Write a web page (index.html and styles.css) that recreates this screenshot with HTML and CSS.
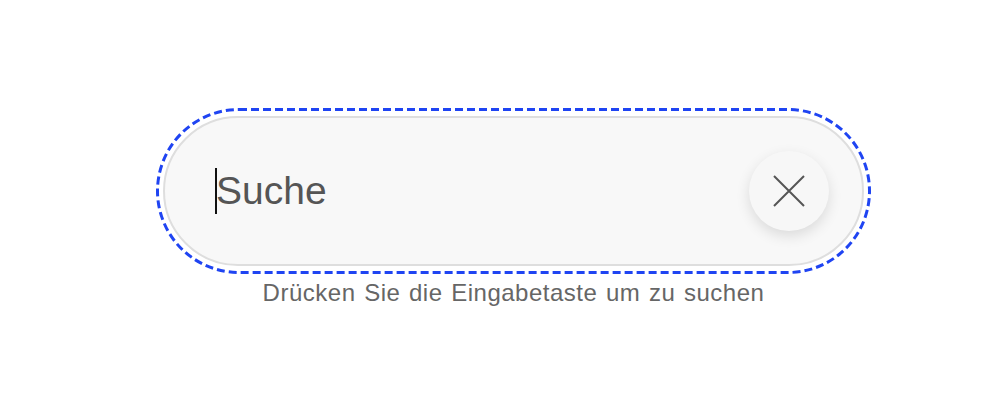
FILE: index.html
```html
<!DOCTYPE html>
<html lang="de">
<head>
    <meta charset="UTF-8">
    <meta name="viewport" content="width=device-width, initial-scale=1.0">
    <title>Suche</title>
    <link rel="stylesheet" href="styles.css">
</head>
<body>
    <div class="search">
        <div class="search-field">
            <!-- focus ring -->
            <svg class="focus-ring" width="717" height="167" viewBox="0 0 717 167">
                <rect x="1.5" y="1.5" width="712" height="163" rx="81.5" ry="81.5"
                      fill="none" stroke="#1f44f2" stroke-width="3" stroke-dasharray="8 4"/>
            </svg>
            <span class="caret"></span>
            <span class="placeholder">Suche</span>
            <button class="clear" aria-label="Leeren">
                <svg width="32" height="32" viewBox="0 0 32 32">
                    <path d="M1 1 L31 31 M31 1 L1 31" stroke="#555" stroke-width="2" fill="none"/>
                </svg>
            </button>
        </div>
        <p class="hint">Drücken Sie die Eingabetaste um zu suchen</p>
    </div>
</body>
</html>
```

FILE: styles.css
```css
* {
    margin: 0;
    padding: 0;
    box-sizing: border-box;
}

body {
    font-family: "Liberation Sans", Arial, sans-serif;
    background: #fff;
    min-height: 100vh;
}

.search {
    width: 701px;
    margin-left: 163px;
    padding-top: 116px;
}

.search-field {
    position: relative;
    height: 150px;
    display: flex;
    align-items: center;
    padding: 0 33px 0 50px;
    background: #f8f8f8;
    border: 2px solid #dedede;
    border-radius: 75px;
}

.focus-ring {
    position: absolute;
    left: -9px;
    top: -10px;
    pointer-events: none;
}

.caret {
    width: 2px;
    height: 46px;
    background: #111;
    margin-right: -1px;
}

.placeholder {
    flex: 1;
    font-size: 39px;
    color: #555;
}

.clear {
    width: 80px;
    height: 80px;
    border: none;
    border-radius: 50%;
    background: #f7f7f7;
    box-shadow: 0 5px 14px rgba(0, 0, 0, 0.12);
    display: flex;
    align-items: center;
    justify-content: center;
    cursor: pointer;
}

.hint {
    text-align: center;
    font-size: 24px;
    line-height: 28px;
    letter-spacing: 0.5px;
    word-spacing: 1.5px;
    color: #666;
    margin-top: 13px;
}
```
